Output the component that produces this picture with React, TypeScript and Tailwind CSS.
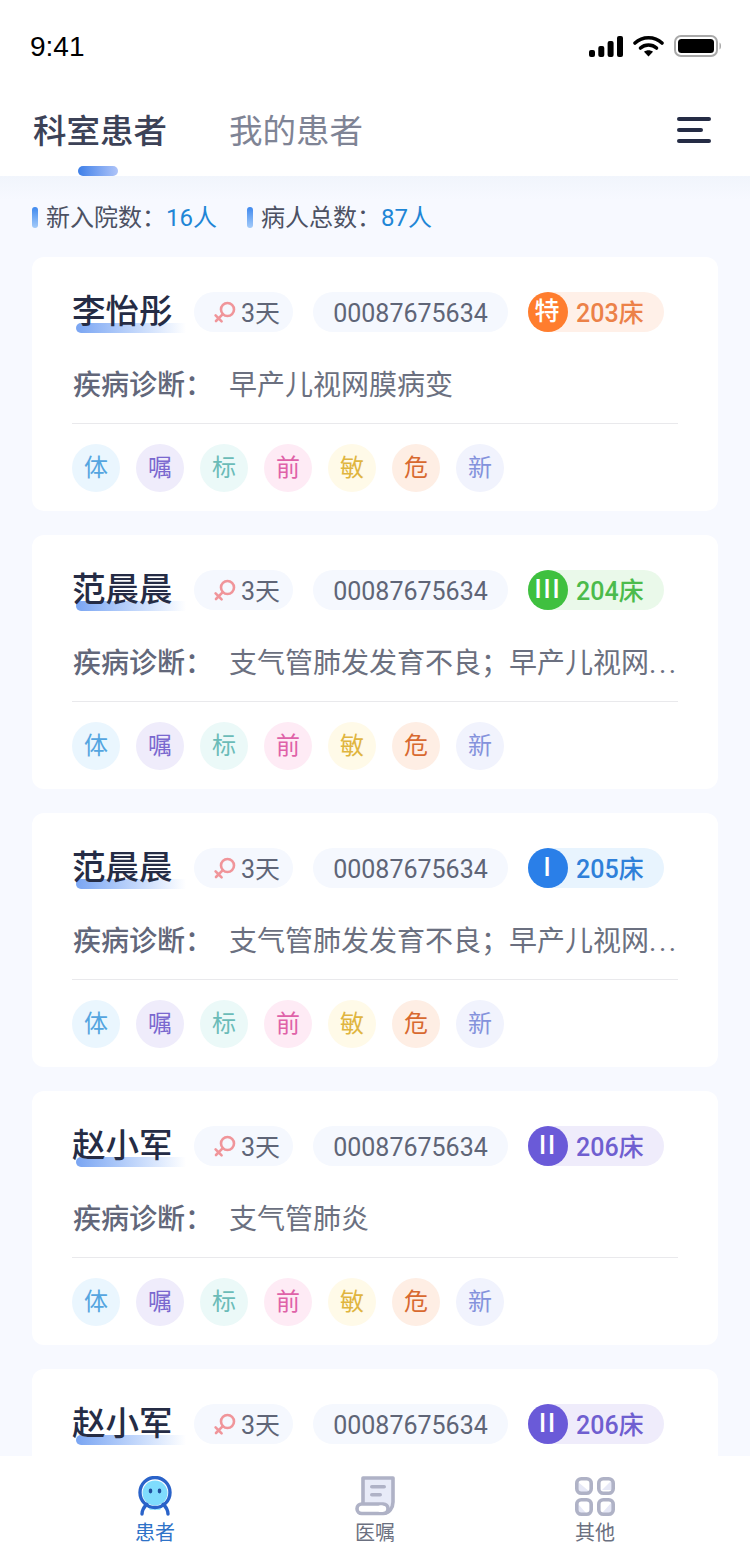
import React from "react";

type Bed = { grade: string; bed: string; circle: string; pill: string; text: string };
type Patient = { name: string; diagnosis: string; more?: boolean; bedInfo: Bed };

const orange: Omit<Bed, "bed"> = { grade: "特", circle: "bg-[#ff7d2e]", pill: "bg-[#fff0e8]", text: "text-[#ec8148]" };
const green: Omit<Bed, "bed"> = { grade: "III", circle: "bg-[#3fc03f]", pill: "bg-[#eaf9ea]", text: "text-[#4cbb4c]" };
const blue: Omit<Bed, "bed"> = { grade: "I", circle: "bg-[#2a7fe8]", pill: "bg-[#e8f4fe]", text: "text-[#2f80d9]" };
const violet: Omit<Bed, "bed"> = { grade: "II", circle: "bg-[#6a5ad8]", pill: "bg-[#efecfb]", text: "text-[#6f5fd0]" };

const patients: Patient[] = [
  { name: "李怡彤", diagnosis: "早产儿视网膜病变", bedInfo: { ...orange, bed: "203床" } },
  { name: "范晨晨", diagnosis: "支气管肺发发育不良；早产儿视网", more: true, bedInfo: { ...green, bed: "204床" } },
  { name: "范晨晨", diagnosis: "支气管肺发发育不良；早产儿视网", more: true, bedInfo: { ...blue, bed: "205床" } },
  { name: "赵小军", diagnosis: "支气管肺炎", bedInfo: { ...violet, bed: "206床" } },
];

const lastPatient: Patient = { name: "赵小军", diagnosis: "", bedInfo: { ...violet, bed: "206床" } };

const tags = [
  { label: "体", cls: "bg-[#eaf6fe] text-[#55a5e0]" },
  { label: "嘱", cls: "bg-[#efecfb] text-[#7a68cf]" },
  { label: "标", cls: "bg-[#ebf9f8] text-[#6bbcb8]" },
  { label: "前", cls: "bg-[#feebf5] text-[#df62a8]" },
  { label: "敏", cls: "bg-[#fffae8] text-[#e0b53f]" },
  { label: "危", cls: "bg-[#feeee4] text-[#d8692f]" },
  { label: "新", cls: "bg-[#f1f3fd] text-[#8492dc]" },
];

function FemaleIcon() {
  return (
    <svg width="24" height="24" viewBox="0 0 24 24" fill="none" stroke="#f0959a" strokeWidth="2.6" strokeLinecap="round">
      <circle cx="14.5" cy="9.5" r="6.5" />
      <path d="M9.8 14.2 3 21M2.6 15.4 8.6 21.4" />
    </svg>
  );
}

function SummaryRow({ p }: { p: Patient }) {
  const b = p.bedInfo;
  return (
    <div className="flex h-10 items-center">
      <div className="relative w-[122px] shrink-0">
        <div className="absolute top-[30px] left-1 h-[10px] w-[110px] rounded-l-full bg-gradient-to-r from-[#7aa5f2] to-[#ffffff]" />
        <span className="relative block text-[33.5px] leading-[38px] font-medium text-[#252c45]">{p.name}</span>
      </div>
      <div className="flex h-10 w-[99px] shrink-0 items-center rounded-full bg-[#f5f8fe] pl-[19px] text-[25px] text-[#5f6577]">
        <FemaleIcon />
        <span className="ml-[4px] pt-[4px]">3天</span>
      </div>
      <div className="ml-5 flex h-10 w-[195px] shrink-0 items-center justify-center rounded-full bg-[#f5f8fe] pt-[4px] text-[25px] text-[#5f6577]">
        00087675634
      </div>
      <div className={`ml-5 flex h-10 w-[136px] shrink-0 items-center rounded-full ${b.pill}`}>
        <span
          className={`flex h-10 w-10 items-center justify-center rounded-full text-[25px] font-medium tracking-[2px] text-white ${b.circle}`}
        >
          {b.grade}
        </span>
        <span className={`ml-2 pt-[3px] text-[25px] font-medium ${b.text}`}>{b.bed}</span>
      </div>
    </div>
  );
}

function PatientCard({ p }: { p: Patient }) {
  return (
    <div className="shrink-0 rounded-[12px] bg-white px-10 pt-[35px] pb-[19px]">
      <SummaryRow p={p} />
      <div className="mt-[33px] flex h-10 items-center pt-[2px] text-[28px] leading-10">
        <span className="w-[157px] shrink-0 pl-px font-medium text-[#62677a]">疾病诊断：</span>
        <span className="min-w-0 flex-1 whitespace-nowrap text-[#6b7080]">
          {p.diagnosis}
          {p.more && <span className="tracking-[2.5px]">...</span>}
        </span>
      </div>
      <div className="mt-[18px] h-px bg-[#e9e9ec]" />
      <div className="mt-5 flex gap-4">
        {tags.map((t) => (
          <span key={t.label} className={`flex h-12 w-12 items-center justify-center rounded-full text-2xl ${t.cls}`}>
            {t.label}
          </span>
        ))}
      </div>
    </div>
  );
}

function Stat({ label, value }: { label: string; value: string }) {
  return (
    <div className="flex items-center">
      <span className="h-[21px] w-[6px] rounded-full bg-gradient-to-b from-[#3d88ee] to-[#a4cbf9]" />
      <span className="ml-2 text-2xl text-[#4c5163]">{label}</span>
      <span className="text-2xl text-[#1f86d6]">{value}</span>
    </div>
  );
}

function PatientTabIcon() {
  return (
    <svg width="38" height="40" viewBox="0 0 38 40" fill="none">
      <path d="M6 38c0-4 2-7 5-10" stroke="#2a63c9" strokeWidth="3.4" strokeLinecap="round" />
      <path d="M32 38c0-4-2-7-5-10" stroke="#2a63c9" strokeWidth="3.4" strokeLinecap="round" />
      <circle cx="19" cy="17" r="12.5" fill="#7fdcfd" />
      <path d="M11 30h16l-3 4h-10z" fill="#a6e8fd" />
      <circle cx="19" cy="16.500" r="15" stroke="#2a63c9" strokeWidth="3.400" />
      <ellipse cx="14.500" cy="15" rx="1.800" ry="2.400" fill="#1e4f9e" />
      <ellipse cx="23.500" cy="15" rx="1.800" ry="2.400" fill="#1e4f9e" />
    </svg>
  );
}

function OrdersTabIcon() {
  return (
    <svg width="40" height="40" viewBox="0 0 40 40" fill="none">
      <path d="M8 2h29v24a11 11 0 0 1-8 11H10a4 4 0 0 1-2-3z" fill="#e8ebf8" />
      <path d="M8 27V2h30v24c0 6-4 11-9 11" stroke="#afb2c6" strokeWidth="3.6" strokeLinejoin="round" />
      <rect x="15" y="9" width="16" height="3.6" rx="1.8" fill="#afb2c6" />
      <rect x="15" y="17" width="12" height="3.6" rx="1.8" fill="#afb2c6" />
      <rect x="2" y="28" width="31" height="9.5" rx="4.75" fill="#fff" stroke="#afb2c6" strokeWidth="3.6" />
      <circle cx="26" cy="32.7" r="3.4" fill="#fff" />
    </svg>
  );
}

function GridCell({ x, y, corner }: { x: number; y: number; corner: string }) {
  return (
    <g transform={`translate(${x} ${y})`}>
      <path d={corner} fill="#e6e8f6" />
      <rect x="1.8" y="1.8" width="14.4" height="14.4" rx="4.5" stroke="#afb2c6" strokeWidth="3.6" />
    </g>
  );
}

function OtherTabIcon() {
  return (
    <svg width="40" height="40" viewBox="0 0 40 40" fill="none">
      <GridCell x={0} y={1} corner="M3 15 15 15 3 5z" />
      <GridCell x={22} y={1} corner="M15 3v10H5z" />
      <GridCell x={0} y={22} corner="M3 15h8L3 6z" />
      <GridCell x={22} y={22} corner="M15 4v11H5z" />
    </svg>
  );
}

function TabItem({ label, active, icon }: { label: string; active?: boolean; icon: React.ReactNode }) {
  return (
    <div className="flex flex-col items-center">
      <div className="flex h-10 items-center justify-center">{icon}</div>
      <span className={`mt-[2px] text-[20px] leading-[30px] ${active ? "text-[#2f73c8]" : "text-[#6b7080]"}`}>{label}</span>
    </div>
  );
}

export default function App() {
  return (
    <div className="flex h-[1556px] w-[750px] flex-col overflow-hidden bg-[#f6f8fe] font-['Roboto','Noto_Sans_CJK_SC',sans-serif]">
      <header className="shrink-0 bg-white">
        <div className="flex h-[90px] items-center justify-between pt-[4px] pr-[28px] pl-[30px]">
          <span className="font-['Liberation_Sans',sans-serif] text-[28px] leading-none text-black">9:41</span>
          <div className="mb-[2px] flex items-center gap-[10px]">
            <svg width="34" height="21" viewBox="0 0 34 21" fill="#000">
              <rect x="0" y="14" width="6" height="7" rx="2" />
              <rect x="9.3" y="10" width="6" height="11" rx="2" />
              <rect x="18.6" y="5" width="6" height="16" rx="2" />
              <rect x="28" y="0" width="6" height="21" rx="2" />
            </svg>
            <svg width="31" height="22" viewBox="0 0 31 22" fill="none" stroke="#000" strokeWidth="3.6" strokeLinecap="round">
              <path d="M2 8C9.5 1 21.5 1 29 8" />
              <path d="M7.5 13c4.5-4 11.5-4 16 0" />
              <path d="M15.5 21.5 11 16.8c2.5-2 6.5-2 9 0z" fill="#000" stroke="none" />
            </svg>
            <svg width="48" height="22" viewBox="0 0 48 22" fill="none">
              <rect x="1" y="1" width="42" height="20" rx="6" stroke="#a9a9a9" strokeWidth="2" />
              <rect x="4" y="4" width="36" height="14" rx="3.5" fill="#000" />
              <path d="M45.5 7.5c2 .6 2 6.400 0 7z" fill="#a9a9a9" />
            </svg>
          </div>
        </div>
        <div className="flex h-[86px] items-start pr-[39px] pl-[33px]">
          <div className="flex h-[86px] w-[134px] flex-col">
            <span className="mt-[17px] text-[33.5px] leading-[50px] font-medium text-[#3c4257]">科室患者</span>
            <span className="mt-[9px] ml-[45px] h-[10px] w-10 rounded-full bg-gradient-to-r from-[#3d7fe8] to-[#afc4f8]" />
          </div>
          <span className="mt-[17px] ml-[62px] text-[33.5px] leading-[50px] text-[#7f8495]">我的患者</span>
          <svg className="mt-[27px] ml-auto" width="34" height="26" viewBox="0 0 34 26" fill="#252c45">
            <rect x="0" y="0" width="34" height="4" rx="2" />
            <rect x="0" y="11" width="26" height="4" rx="2" />
            <rect x="0" y="22" width="34" height="4" rx="2" />
          </svg>
        </div>
      </header>

      <main className="flex min-h-0 flex-1 flex-col overflow-hidden bg-[linear-gradient(#f1f5fc,#f7f9ff_24px)] px-8">
        <div className="flex h-[81px] shrink-0 items-center gap-[30px] pt-[2px]">
          <Stat label="新入院数：" value="16人" />
          <Stat label="病人总数：" value="87人" />
        </div>
        <div className="flex flex-col gap-6">
          {patients.map((p, i) => (
            <PatientCard key={i} p={p} />
          ))}
          <div className="h-[254px] shrink-0 rounded-[12px] bg-white px-10 pt-[35px]">
            <SummaryRow p={lastPatient} />
          </div>
        </div>
      </main>

      <nav className="grid h-[100px] shrink-0 grid-cols-3 bg-white px-[45px] pt-5">
        <TabItem label="患者" active icon={<PatientTabIcon />} />
        <TabItem label="医嘱" icon={<OrdersTabIcon />} />
        <TabItem label="其他" icon={<OtherTabIcon />} />
      </nav>
    </div>
  );
}
